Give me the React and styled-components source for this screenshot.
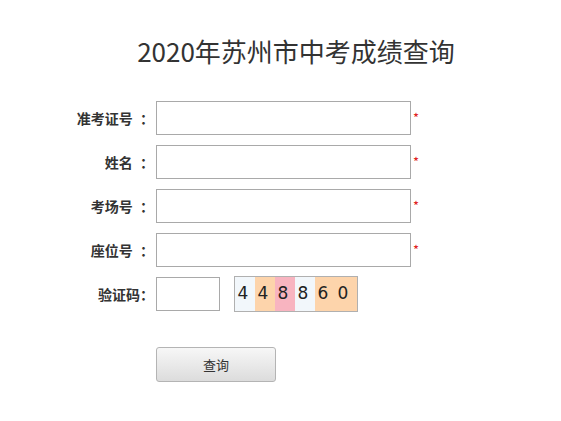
import React from "react";
import styled, { createGlobalStyle } from "styled-components";

const GlobalStyle = createGlobalStyle`
  html, body {
    margin: 0;
    padding: 0;
    background: #fff;
  }
  body {
    font-family: "Noto Sans CJK SC", "Noto Sans", sans-serif;
    color: #333;
  }
`;

const fields = [
  { id: "zkzh", label: "准考证号", required: true },
  { id: "xm", label: "姓名", required: true },
  { id: "kch", label: "考场号", required: true },
  { id: "zwh", label: "座位号", required: true },
];

const captcha = [
  { ch: "4", bg: "#f2f7fb" },
  { ch: "4", bg: "#fdd4ab" },
  { ch: "8", bg: "#f8b4c0" },
  { ch: "8", bg: "#f2f7fb" },
  { ch: "6", bg: "#fdd4ab" },
  { ch: "0", bg: "#fdd4ab" },
];

export default function App() {
  return (
    <Page>
      <GlobalStyle />
      <Title>2020年苏州市中考成绩查询</Title>
      <Form>
        {fields.map((f) => (
          <Row key={f.id}>
            <Label>
              {f.label} <Colon $spaced>：</Colon>
            </Label>
            <Input />
            {f.required && <Star>*</Star>}
          </Row>
        ))}
        <Row>
          <Label>
            验证码<Colon>：</Colon>
          </Label>
          <Input $small />
          <Captcha width="124" height="36" viewBox="0 0 124 36">
            <rect x="0.5" y="0.5" width="123" height="35" fill="#fff" stroke="#b0b0b0" />
            {captcha.map((c, i) => (
              <rect key={"r" + i} x={1 + i * 20} y="1" width={i === 5 ? 22 : 20} height="34" fill={c.bg} />
            ))}
            {captcha.map((c, i) => (
              <text
                key={"t" + i}
                x={9 + i * 20}
                y="23"
                fontFamily="'DejaVu Sans', sans-serif"
                fontSize="17"
                fill="#222"
                textAnchor="middle"
              >
                {c.ch}
              </text>
            ))}
          </Captcha>
        </Row>
        <ButtonRow>
          <Button>查询</Button>
        </ButtonRow>
      </Form>
    </Page>
  );
}

const Page = styled.div`
  width: 561px;
  min-height: 421px;
  padding-top: 33px;
  box-sizing: border-box;
`;

const Title = styled.h1`
  margin: 0 0 0 31px;
  text-align: center;
  font-size: 26px;
  font-weight: normal;
  line-height: 36px;
  color: #333;
  letter-spacing: 0;
`;

const Form = styled.div`
  margin-top: 32px;
  display: flex;
  flex-direction: column;
  gap: 10px;
`;

const Row = styled.div`
  display: flex;
  align-items: center;
  height: 34px;
`;

const Label = styled.label`
  width: 152px;
  padding-right: 4px;
  box-sizing: content-box;
  text-align: right;
  font-size: 14px;
  font-weight: 700;
  color: #333;
`;

const Colon = styled.span`
  display: inline-block;
  width: 12px;
  margin-left: ${(p) => (p.$spaced ? "4px" : "0")};
  text-align: left;
`;

const Input = styled.input`
  width: ${(p) => (p.$small ? "64px" : "255px")};
  height: 34px;
  box-sizing: border-box;
  border: 1px solid #a9a9a9;
  padding: 0 6px;
  margin: 0;
  font-size: 13px;
  outline: none;
`;

const Star = styled.span`
  align-self: flex-start;
  margin: 10px 0 0 2px;
  color: #e02020;
  font-size: 13px;
  line-height: 14px;
`;

const Captcha = styled.svg`
  margin-left: 14px;
  display: block;
`;

const ButtonRow = styled.div`
  margin-top: 26px;
  padding-left: 156px;
`;

const Button = styled.button`
  width: 120px;
  height: 35px;
  border: 1px solid #b4b4b4;
  border-radius: 3px;
  background: linear-gradient(#f7f7f7, #dcdcdc);
  font-family: "Noto Sans CJK SC", sans-serif;
  font-size: 13px;
  color: #333;
  cursor: pointer;
`;
